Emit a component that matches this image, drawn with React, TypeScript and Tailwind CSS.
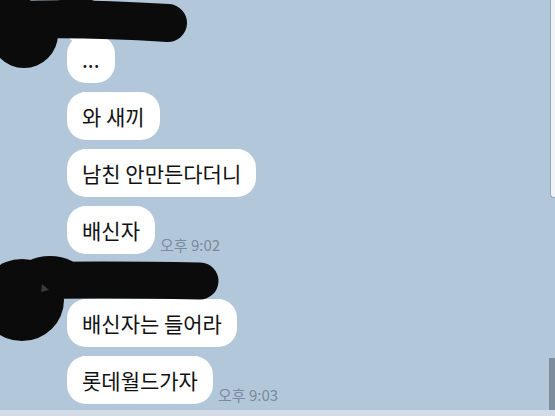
import type { ReactNode } from "react";

const font = { fontFamily: '"Noto Sans CJK KR", "Noto Sans", sans-serif' };

function Bubble({ children, tail }: { children: ReactNode; tail?: boolean }) {
  return (
    <div className="relative">
      {tail && (
        <svg className="absolute -left-[3px] -top-[1px]" width="12" height="10" viewBox="0 0 12 10" aria-hidden="true">
          <path d="M0 0 L12 0 L12 10 Z" fill="#ffffff" />
        </svg>
      )}
      <div className="rounded-[19px] bg-white px-[15px] py-[11px] text-[21px] leading-[26px] text-[#111111]">
        {children}
      </div>
    </div>
  );
}

function Row({ text, time, tail }: { text: string; time?: string; tail?: boolean }) {
  return (
    <div className="flex items-end gap-[5px]">
      <Bubble tail={tail}>{text}</Bubble>
      {time && <span className="mb-[1px] text-[15px] leading-[17px] text-[#7a8a9a]">{time}</span>}
    </div>
  );
}

function Blobs() {
  return (
    <svg className="pointer-events-none absolute left-0 top-0" width="555" height="416" viewBox="0 0 555 416" aria-hidden="true">
      <g fill="#0b0b0b" stroke="#0b0b0b" strokeLinecap="round">
        {/* top sender name + avatar */}
        <path d="M18 20 C 70 18, 120 20, 168 23" strokeWidth="38" fill="none" />
        <ellipse cx="24" cy="34" rx="34" ry="34" stroke="none" />
        <ellipse cx="76" cy="12" rx="30" ry="14" stroke="none" />
        <rect x="0" y="0" width="30" height="20" stroke="none" />
        {/* second sender name + avatar */}
        <path d="M20 281 C 90 279, 150 280, 200 281" strokeWidth="37" fill="none" />
        <ellipse cx="50" cy="272" rx="30" ry="16" stroke="none" />
        <ellipse cx="22" cy="300" rx="42" ry="41" stroke="none" />
      </g>
      <path d="M42 284 L49 290 L41 292 Z" fill="#3a3a3a" />
    </svg>
  );
}

export default function App() {
  return (
    <div className="relative flex h-[416px] w-[555px] flex-col overflow-hidden bg-[#b2c7da]" style={font}>
      <div className="flex-1 pl-[67px] pt-[35px]">
        <div className="flex flex-col items-start gap-[9px]">
          <Row text="..." tail />
          <Row text="와 새끼" />
          <Row text="남친 안만든다더니" />
          <Row text="배신자" time="오후 9:02" />
        </div>
        <div className="mt-[45px] flex flex-col items-start gap-[9px]">
          <Row text="배신자는 들어라" />
          <Row text="롯데월드가자" time="오후 9:03" />
        </div>
      </div>
      <div className="h-[6px] bg-[#d3dce6]" />

      <Blobs />

      {/* scroll thumbs on the right edge */}
      <div className="absolute right-0 top-0 h-[198px] w-[5px] rounded-bl-[4px] border-b border-l border-[#98a5b2] bg-[#f1f3f6]" />
      <div className="absolute bottom-[6px] right-0 h-[52px] w-[6px] bg-[#7e8d9c]" />
    </div>
  );
}
